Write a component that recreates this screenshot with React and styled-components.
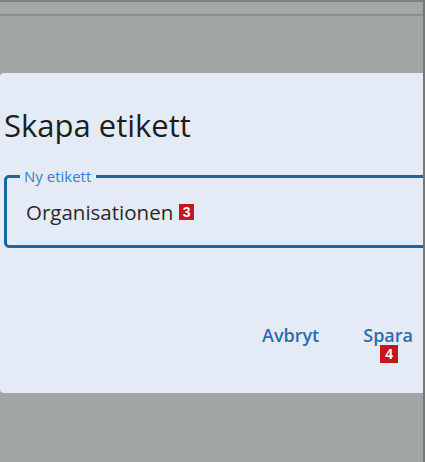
import React from "react";
import styled, { createGlobalStyle } from "styled-components";

const Global = createGlobalStyle`
  html, body { margin: 0; padding: 0; }
  body { background: #a1a5a4; font-family: "Open Sans", "Noto Sans", sans-serif; overflow: hidden; }
`;

const Page = styled.div`
  width: 425px;
  height: 462px;
  box-sizing: border-box;
  border-right: 2px solid #747877;
  background: #a1a5a4;
  display: flex;
  flex-direction: column;
  overflow: hidden;
`;

const TopBar = styled.div`
  height: 16px;
  flex: none;
  box-sizing: border-box;
  border-top: 2px solid #7d8180;
  border-bottom: 2px solid #8b8f8e;
  background: #a3a7a6;
`;

const Dialog = styled.div`
  margin-top: 57px;
  height: 320px;
  flex: none;
  background: #e4ebf6;
  border-top-left-radius: 4px;
  border-bottom-left-radius: 4px;
  display: flex;
  flex-direction: column;
  overflow: hidden;
`;

const Title = styled.h1`
  margin: 31px 0 0 4px;
  font-size: 31px;
  font-weight: 400;
  line-height: 42px;
  color: #1c1f22;
`;

const Field = styled.fieldset`
  margin: 23px -40px 0 4px;
  padding: 0 0 0 19px;
  height: 79px;
  box-sizing: border-box;
  border: 3px solid #1c67a0;
  border-radius: 5px;
  display: flex;
  align-items: flex-start;
`;

const Legend = styled.legend`
  margin-left: -6px;
  padding: 0 5px 0 4px;
  font-size: 15px;
  line-height: 15px;
  color: #3a7cce;
`;

const Value = styled.div`
  margin-top: 15px;
  display: flex;
  align-items: center;
  gap: 6px;
  font-size: 20.5px;
  line-height: 26px;
  color: #262a2d;
`;

const Badge = styled.span`
  display: inline-flex;
  align-items: center;
  justify-content: center;
  width: ${(p) => p.$w || 16}px;
  height: ${(p) => p.$h || 17}px;
  background: #c5151f;
  color: #fff;
  font-family: "Liberation Sans", Arial, sans-serif;
  font-weight: 700;
  font-size: 14px;
  line-height: 1;
`;

const Actions = styled.div`
  margin-top: 76px;
  display: flex;
  justify-content: flex-end;
  gap: 44px;
  padding-right: 10px;
`;

const Action = styled.button`
  position: relative;
  background: none;
  border: none;
  padding: 0;
  font-family: "Open Sans", sans-serif;
  font-size: 18px;
  font-weight: 600;
  line-height: 22px;
  color: #2a6bb4;
  cursor: pointer;
`;

const ActionBadge = styled(Badge)`
  position: absolute;
  left: 17px;
  top: 21px;
`;

export default function App() {
  return (
    <>
      <Global />
      <Page>
        <TopBar />
        <Dialog>
          <Title>Skapa etikett</Title>
          <Field>
            <Legend>Ny etikett</Legend>
            <Value>
              Organisationen
              <Badge $w={15} $h={16}>3</Badge>
            </Value>
          </Field>
          <Actions>
            <Action>Avbryt</Action>
            <Action>
              Spara
              <ActionBadge $w={18} $h={18}>4</ActionBadge>
            </Action>
          </Actions>
        </Dialog>
      </Page>
    </>
  );
}
